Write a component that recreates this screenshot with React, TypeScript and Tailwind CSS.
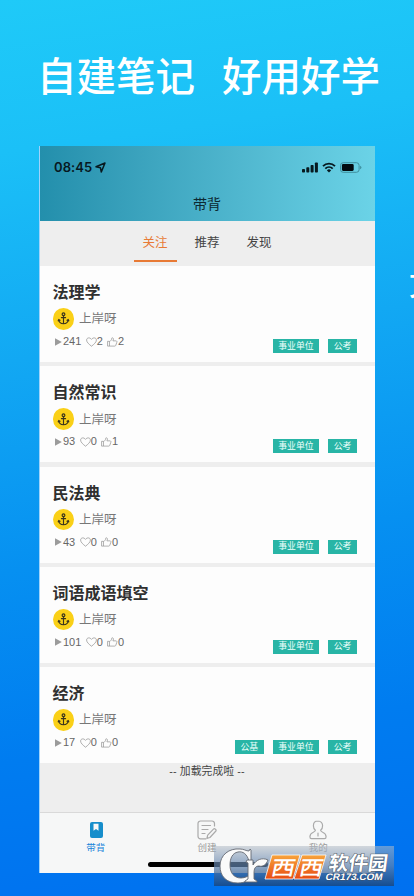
import type { ReactNode } from "react";

type Note = {
  title: string;
  plays: number;
  hearts: number;
  likes: number;
  tags: string[];
};

const notes: Note[] = [
  { title: "法理学", plays: 241, hearts: 2, likes: 2, tags: ["事业单位", "公考"] },
  { title: "自然常识", plays: 93, hearts: 0, likes: 1, tags: ["事业单位", "公考"] },
  { title: "民法典", plays: 43, hearts: 0, likes: 0, tags: ["事业单位", "公考"] },
  { title: "词语成语填空", plays: 101, hearts: 0, likes: 0, tags: ["事业单位", "公考"] },
  { title: "经济", plays: 17, hearts: 0, likes: 0, tags: ["公基", "事业单位", "公考"] },
];

function StatusBar() {
  return (
    <div className="flex h-[42px] items-center justify-between pl-[14px] pr-[13px]">
      <div className="flex items-center gap-[3px] text-[#07191f]">
        <span className="font-['Inter','Liberation_Sans',sans-serif] text-[13px] font-semibold leading-none tracking-[0.1px]">
          08:45
        </span>
        <svg className="h-[11px] w-[11px]" viewBox="0 0 11 11" fill="none" stroke="currentColor" strokeWidth="1.5" strokeLinejoin="round">
          <path d="M10 1 6.3 10 5.4 5.7 1 4.8Z" />
        </svg>
      </div>
      <div className="flex items-center gap-1">
        <svg className="h-[11px] w-4" viewBox="0 0 16 11" fill="#07191f">
          <rect x="0" y="7" width="3" height="3.5" rx="0.8" />
          <rect x="4.3" y="5.2" width="3" height="5.3" rx="0.8" />
          <rect x="8.6" y="3" width="3" height="7.5" rx="0.8" />
          <rect x="12.9" y="0.5" width="3" height="10" rx="0.8" />
        </svg>
        <svg className="h-[11px] w-[14px]" viewBox="0 0 14 11" fill="none" stroke="#07191f" strokeWidth="1.9">
          <path d="M1 4.1a8.5 8.5 0 0 1 12 0" />
          <path d="M3.3 6.6a5.3 5.3 0 0 1 7.4 0" />
          <path d="M7 10.5 4.9 8.4a3 3 0 0 1 4.2 0Z" fill="#07191f" stroke="none" />
        </svg>
        <svg className="h-[11px] w-[22px]" viewBox="0 0 22 11">
          <rect x="0.5" y="0.7" width="18.6" height="9.6" rx="2.7" fill="none" stroke="#3f8f9d" />
          <rect x="1.9" y="2.1" width="11.8" height="6.8" rx="1.3" fill="#020b10" />
          <path d="M20.3 3.8v3.4a1.9 1.9 0 0 0 0-3.4" fill="#2f7a89" />
        </svg>
      </div>
    </div>
  );
}

function Tabs() {
  return (
    <div className="flex h-[45px] shrink-0 justify-center gap-[9px] bg-[#eeeeee] pb-1 pr-px text-[12.5px] text-[#444]">
      <div className="flex w-[43px] items-center justify-center border-b-2 border-[#e87a35] pt-[5px] text-[#e87a35]">关注</div>
      <div className="flex w-[43px] items-center justify-center border-b-2 border-transparent pt-[5px]">推荐</div>
      <div className="flex w-[43px] items-center justify-center border-b-2 border-transparent pt-[5px]">发现</div>
    </div>
  );
}

function AnchorAvatar() {
  return (
    <div className="flex h-[21.5px] w-[21.5px] items-center justify-center rounded-full bg-[#fad017]">
      <svg className="h-[13px] w-[13px]" viewBox="0 0 13 13" fill="none" stroke="#39331d" strokeWidth="1.15" strokeLinecap="round">
        <circle cx="6.5" cy="2.2" r="1.4" />
        <path d="M6.5 3.7v8M4.4 5.6h4.2M1.8 7.8c.2 2.6 2.1 3.9 4.7 3.9s4.5-1.3 4.7-3.9M1.2 8.8l.6-1.2 1.2.7M11.8 8.8l-.6-1.2-1.2.7" />
      </svg>
    </div>
  );
}

function NoteCard({ note }: { note: Note }) {
  return (
    <div className="flex h-24 shrink-0 flex-col bg-[#fdfdfd] pl-[12.5px] pr-[18px] pt-[15px]">
      <h2 className="text-[16px] font-bold leading-[23px] text-[#303030]">{note.title}</h2>
      <div className="mt-1 flex items-center gap-[5px]">
        <AnchorAvatar />
        <span className="pt-px text-[12.5px] leading-5 text-[#777]">上岸呀</span>
      </div>
      <div className="flex h-[25px] items-start justify-between">
        <div className="flex h-6 items-center pl-[2px] font-['Liberation_Sans',Arial,sans-serif] text-[11px] leading-none text-[#666]">
          <svg className="h-2 w-[7px]" viewBox="0 0 7 8" fill="#9b9b9b">
            <path d="M0 0.3 6.8 4 0 7.7Z" />
          </svg>
          <span className="ml-[1.5px]">{note.plays}</span>
          <svg className="ml-[4.5px] h-[10px] w-[11px]" viewBox="0 0 11 10" fill="none" stroke="#999" strokeWidth="0.8">
            <path d="M5.5 9.2C3.2 7.4.6 5.3.6 3.1.6.5 4 .1 5.5 2.4 7 .1 10.4.5 10.4 3.1c0 2.2-2.6 4.3-4.9 6.1Z" />
          </svg>
          <span>{note.hearts}</span>
          <svg className="ml-[4.5px] h-[10px] w-[10.5px]" viewBox="0 0 11 10" fill="none" stroke="#999" strokeWidth="0.8" strokeLinejoin="round">
            <path d="M.6 4.3h2v5h-2ZM2.6 4.5C4 4 4.8 2.8 4.9 1.2c.1-1 1.8-.8 1.8.7 0 .7-.2 1.4-.5 1.9h3.2c.8 0 1.2.7.9 1.5L9.2 8.5c-.2.5-.6.8-1.1.8H2.6" />
          </svg>
          <span>{note.likes}</span>
        </div>
        <div className="mt-[9.5px] flex gap-[9px]">
          {note.tags.map((tag) => (
            <span key={tag} className="flex h-[14px] items-center bg-[#28b5a6] px-[5.5px] text-[8.9px] leading-none text-[#edfffb]">
              {tag}
            </span>
          ))}
        </div>
      </div>
    </div>
  );
}

function NavItem({ label, active, children }: { label: string; active?: boolean; children: ReactNode }) {
  return (
    <div className={`flex flex-1 flex-col items-center pt-[7px] text-[9.5px] leading-[14px] ${active ? "text-[#1683da]" : "text-[#999]"}`}>
      <svg className="h-5 w-5" viewBox="0 0 20 20" fill="none" stroke="#aaa" strokeWidth="1.2" strokeLinecap="round" strokeLinejoin="round">
        {children}
      </svg>
      <span className="mt-[1px]">{label}</span>
    </div>
  );
}

function BottomNav() {
  return (
    <div className="relative flex h-[61px] shrink-0 border-t border-[#d9d9d9] bg-[#f6f7f7] pr-px">
      <NavItem label="带背" active>
        <rect x="4" y="2" width="13" height="16" rx="2" fill="#168ecb" stroke="none" />
        <path d="M7.5 3.7h5v7L10 9l-2.5 1.7Z" fill="#f6f7f7" stroke="none" />
      </NavItem>
      <NavItem label="创建">
        <path d="M17.5 6V3.5A2.5 2.5 0 0 0 15 1H3.5A2.5 2.5 0 0 0 1 3.5v12.8a2.5 2.5 0 0 0 2.5 2.5H9M5 5.5h8.5M5 9.5h6M5 13.5h3" />
        <path d="m10.7 15.2 6-6.3c.8-.8 3.1 1 2.2 2.1l-6 6.5-3 .8Z" />
      </NavItem>
      <NavItem label="我的">
        <path d="M10 1C7.2 1 5.4 3 5.4 5.7c0 2 .7 3.6 2 4.6-.1 1-.8 1.4-2.1 2-2.1.9-3.3 1.8-3.4 4.5 0 1.3.5 1.9 1.6 1.9h13c1.1 0 1.6-.6 1.6-1.9-.1-2.7-1.3-3.6-3.4-4.5-1.3-.6-2-1-2.1-2 1.3-1 2-2.6 2-4.6C14.6 3 12.8 1 10 1ZM10 13v3" />
      </NavItem>
      <div className="absolute bottom-[6.5px] left-[107.5px] h-[5px] w-[120px] rounded-full bg-black" />
    </div>
  );
}

function SiteStamp() {
  return (
    <div className="absolute left-[214px] top-[846px] h-10 w-[180px] bg-linear-to-b from-[#b4bcc6]/55 via-[#5f82ad]/70 to-[#1b4478]/80">
      <svg className="h-full w-full" viewBox="0 0 180 40">
        <defs>
          <linearGradient id="tile" x1="0" y1="0" x2="0" y2="1">
            <stop offset="0" stopColor="#f7a43c" />
            <stop offset="1" stopColor="#e84b12" />
          </linearGradient>
        </defs>
        <g fill="#fafafa" stroke="#656a73" strokeWidth="0.9">
          <path d="M37 4v11h-2C33 8 29 5 24 6c-6 1-8 7-8 13 0 8 4 13 11 13 4 0 8-2 11-5l2 2c-4 5-9 8-16 8C12 37 6 30 6 20 6 9 15 2 26 3c4 0 6 2 9 2l1-2Z" />
          <path d="M33 14h6v5c3-5 9-8 15-5-2 5-5 7-9 6-4 0-5 3-5 7v6l3 2v1H31v-1l3-2V17l-2-1Z" />
        </g>
        <g fill="url(#tile)" stroke="#fff" strokeWidth="0.8">
          <path d="M58 9h28l-7 24H51Z" />
          <path d="M88 9h24l-7 24H80Z" />
        </g>
        <g fontFamily="'Noto Sans CJK SC',sans-serif" fontWeight="700" fill="#fff">
          <text transform="translate(56 28.5) skewX(-12) scale(1.2 1)" fontSize="20" fontWeight="500">西</text>
          <text transform="translate(84 28.5) skewX(-12) scale(1.2 1)" fontSize="20" fontWeight="500">西</text>
          <text
            transform="translate(114 24) skewX(-8)"
            fontSize="19.5"
            textLength="59"
            lengthAdjust="spacingAndGlyphs"
            stroke="#515b68"
            strokeWidth="1"
            paintOrder="stroke"
          >
            软件园
          </text>
        </g>
        <text
          transform="translate(111 34) skewX(-12)"
          fontFamily="'Liberation Sans',sans-serif"
          fontSize="9.5"
          fontWeight="700"
          fill="#fff"
          stroke="#40516a"
          strokeWidth="0.8"
          paintOrder="stroke"
          textLength="57"
          lengthAdjust="spacingAndGlyphs"
        >
          CR173.COM
        </text>
      </svg>
    </div>
  );
}

export default function App() {
  return (
    <main className="relative flex h-[896px] w-[414px] flex-col overflow-hidden bg-[linear-gradient(172deg,#1fcaf8_0%,#1bc0f7_16%,#12a8f3_38%,#0690f1_60%,#007cf0_80%,#0070f0_100%)] font-['Liberation_Sans','Noto_Sans_CJK_SC',sans-serif]">
      <h1 className="flex h-[146px] shrink-0 gap-[27px] whitespace-nowrap pl-[37px] pt-[47px] text-[39.5px] font-medium leading-[60px] text-white">
        <span>自建笔记</span>
        <span>好用好学</span>
      </h1>
      <section className="ml-[39px] flex h-[727px] w-[336px] shrink-0 flex-col border-l border-[#9fd3fb] bg-[#eeeeee]">
        <header className="h-[75px] shrink-0 bg-linear-to-r from-[#238fac] to-[#6bd3e7]">
          <StatusBar />
          <p className="pr-px text-center text-[14px] leading-[32px] text-[#0c2932]">带背</p>
        </header>
        <Tabs />
        <div className="flex shrink-0 flex-col gap-[4.3px]">
          {notes.map((note) => (
            <NoteCard key={note.title} note={note} />
          ))}
        </div>
        <p className="flex-1 pr-px text-center text-[10.8px] leading-[17px] tracking-[0.1px] text-[#444]">-- 加载完成啦 --</p>
        <BottomNav />
      </section>
      {/* Headline of the next slide, peeking in at the edge */}
      <span className="absolute left-[409px] top-[270px] text-[30px] font-medium leading-[30px] text-white">文</span>
      <SiteStamp />
    </main>
  );
}
